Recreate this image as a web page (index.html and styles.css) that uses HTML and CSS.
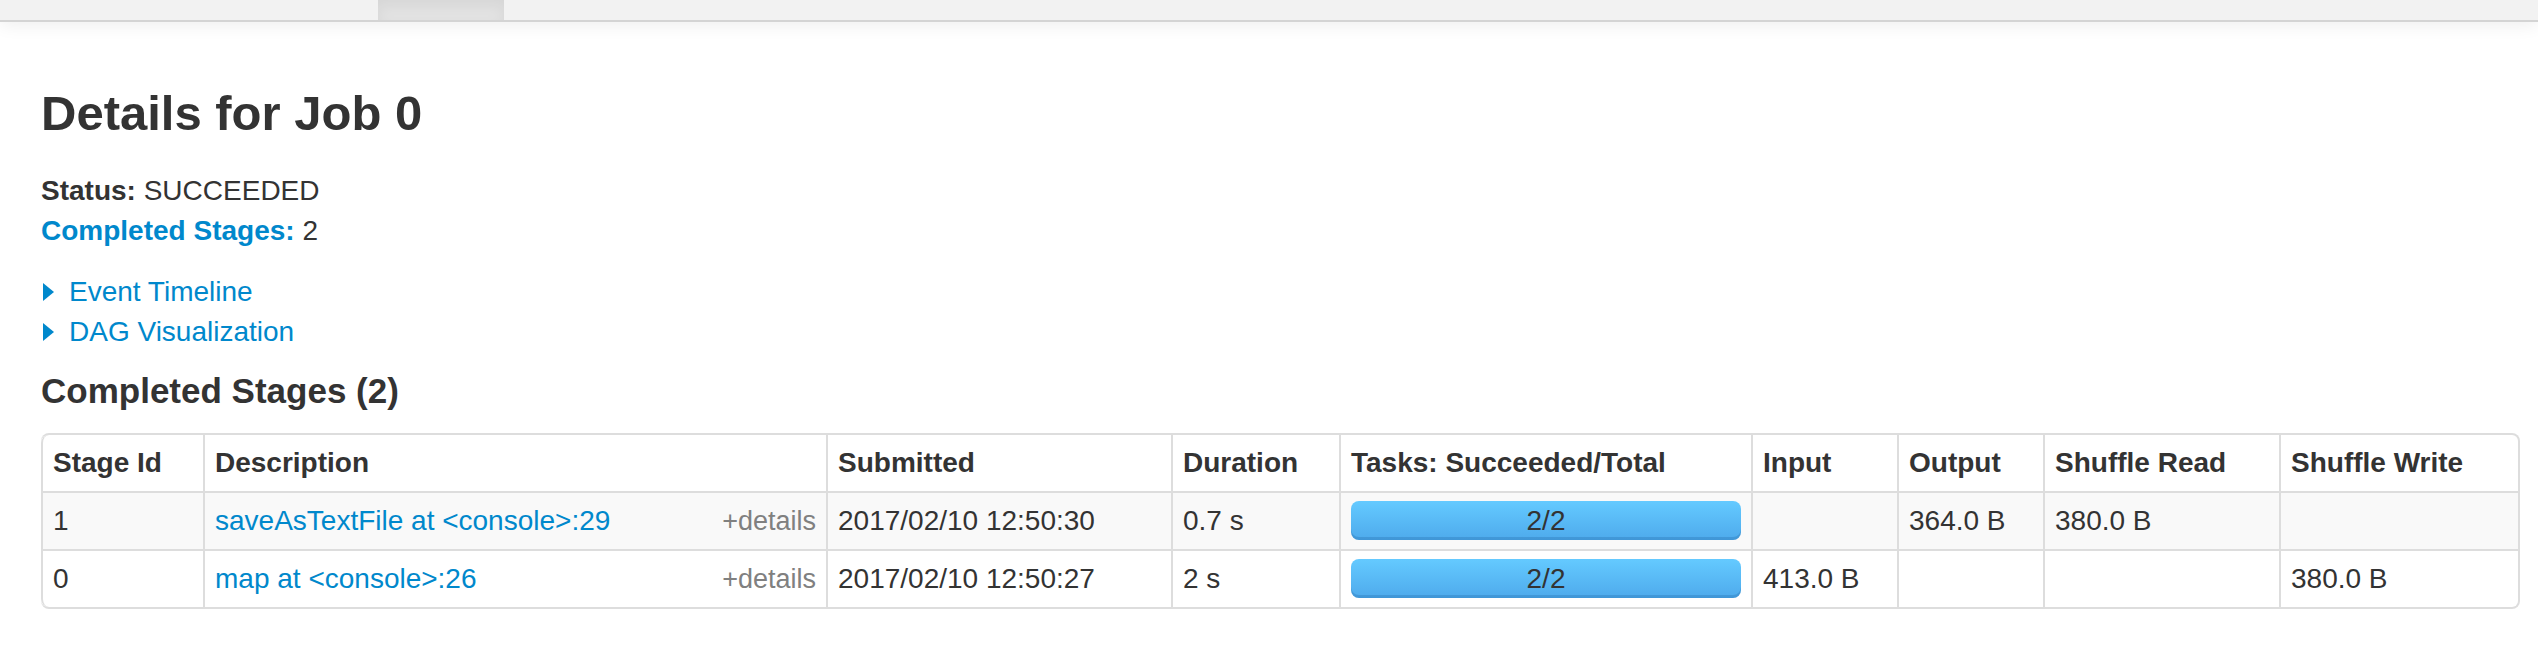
FILE: index.html
```html
<!DOCTYPE html>
<html lang="en">
<head>
<meta charset="utf-8">
<title>Details for Job 0</title>
<link rel="stylesheet" href="styles.css">
</head>
<body>
<div class="navbar">
  <div class="nav-brand"></div>
  <div class="nav-tab active"></div>
</div>
<div class="main">
  <h3 class="page-title">Details for Job 0</h3>
  <ul class="summary">
    <li><strong>Status:</strong> SUCCEEDED</li>
    <li><a class="link" href="#completed"><strong>Completed Stages:</strong></a> 2</li>
  </ul>
  <div class="toggles">
    <a class="toggle" href="#timeline"><span class="arrow"></span>Event Timeline</a>
    <a class="toggle" href="#dag"><span class="arrow"></span>DAG Visualization</a>
  </div>
  <h4 class="section-title" id="completed">Completed Stages (2)</h4>
  <table class="stages">
    <colgroup>
      <col class="c-id">
      <col class="c-desc">
      <col class="c-sub">
      <col class="c-dur">
      <col class="c-tasks">
      <col class="c-in">
      <col class="c-out">
      <col class="c-sr">
      <col class="c-sw">
    </colgroup>
    <thead>
      <tr>
        <th>Stage Id</th>
        <th>Description</th>
        <th>Submitted</th>
        <th>Duration</th>
        <th>Tasks: Succeeded/Total</th>
        <th>Input</th>
        <th>Output</th>
        <th>Shuffle Read</th>
        <th>Shuffle Write</th>
      </tr>
    </thead>
    <tbody>
      <tr class="odd">
        <td>1</td>
        <td><span class="details">+details</span><a class="link" href="#s1">saveAsTextFile at &lt;console&gt;:29</a></td>
        <td>2017/02/10 12:50:30</td>
        <td>0.7 s</td>
        <td><div class="progress">2/2</div></td>
        <td></td>
        <td>364.0 B</td>
        <td>380.0 B</td>
        <td></td>
      </tr>
      <tr>
        <td>0</td>
        <td><span class="details">+details</span><a class="link" href="#s0">map at &lt;console&gt;:26</a></td>
        <td>2017/02/10 12:50:27</td>
        <td>2 s</td>
        <td><div class="progress">2/2</div></td>
        <td>413.0 B</td>
        <td></td>
        <td></td>
        <td>380.0 B</td>
      </tr>
    </tbody>
  </table>
</div>
</body>
</html>
```
FILE: styles.css
```css
html, body {
  margin: 0;
  padding: 0;
  background: #ffffff;
}
body {
  font-family: "Liberation Sans", Arial, Helvetica, sans-serif;
  font-size: 28px;
  line-height: 40px;
  color: #333333;
}
.navbar {
  display: flex;
  height: 20px;
  background: #f2f2f2;
  border-bottom: 2px solid #d4d4d4;
  box-shadow: 0 3px 18px rgba(0, 0, 0, 0.07);
  position: relative;
}
.nav-brand {
  width: 378px;
}
.nav-tab {
  width: 126px;
}
.nav-tab.active {
  background: #e3e3e3;
  box-shadow: inset 0 6px 14px rgba(0, 0, 0, 0.06);
}
.main {
  padding: 0 20px 0 41px;
}
.page-title {
  margin: 51px 0 18px;
  font-size: 49px;
  line-height: 80px;
  font-weight: bold;
  color: #333333;
}
.summary {
  list-style: none;
  margin: 0 0 21px;
  padding: 0;
}
.link {
  color: #0088cc;
  text-decoration: none;
}
.toggles {
  display: flex;
  flex-direction: column;
  align-items: flex-start;
}
.toggle {
  color: #0088cc;
  text-decoration: none;
  display: flex;
  align-items: center;
}
.arrow {
  display: inline-block;
  width: 0;
  height: 0;
  border-top: 9px solid transparent;
  border-bottom: 9px solid transparent;
  border-left: 11px solid #0088cc;
  margin: 0 15px 0 2px;
}
.section-title {
  margin: 19px 0 22px;
  font-size: 35px;
  line-height: 40px;
  font-weight: bold;
  color: #333333;
}
.stages {
  width: 100%;
  table-layout: fixed;
  border-collapse: separate;
  border-spacing: 0;
  border: 2px solid #dddddd;
  border-left: 0;
  border-radius: 8px;
}
.c-id { width: 162px; }
.c-desc { width: 623px; }
.c-sub { width: 345px; }
.c-dur { width: 168px; }
.c-tasks { width: 412px; }
.c-in { width: 146px; }
.c-out { width: 146px; }
.c-sr { width: 236px; }
.c-sw { width: 239px; }
.stages th,
.stages td {
  box-sizing: border-box;
  padding: 8px 10px;
  line-height: 40px;
  text-align: left;
  vertical-align: top;
  border-left: 2px solid #dddddd;
  white-space: nowrap;
}
.stages th {
  font-weight: bold;
}
.stages tbody td {
  border-top: 2px solid #dddddd;
}
.stages thead th:first-child {
  border-top-left-radius: 8px;
}
.stages thead th:last-child {
  border-top-right-radius: 8px;
}
.stages tbody tr:last-child td:first-child {
  border-bottom-left-radius: 8px;
}
.stages tbody tr:last-child td:last-child {
  border-bottom-right-radius: 8px;
}
.stages tr.odd td {
  background: #f9f9f9;
}
.details {
  float: right;
  font-size: 27px;
  color: #808080;
}
.progress {
  height: 39px;
  line-height: 39px;
  margin-bottom: 1px;
  border-radius: 8px;
  text-align: center;
  color: #333333;
  background: linear-gradient(to bottom, #64caff 0%, #4eaaec 100%);
  box-shadow: inset 0 -3px 0 rgba(20, 80, 140, 0.22);
}
```
